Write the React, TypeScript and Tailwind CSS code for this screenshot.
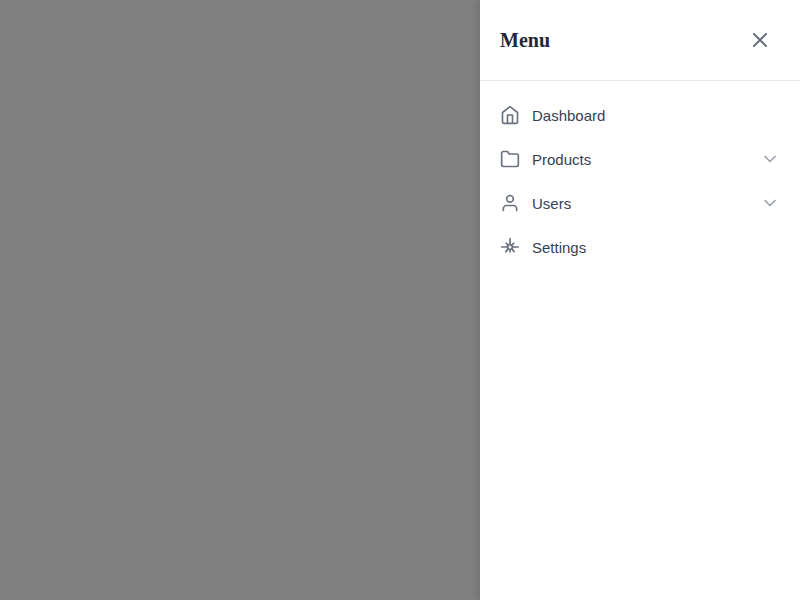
import React from "react";

const icon = {
  width: 20,
  height: 20,
  viewBox: "0 0 24 24",
  fill: "none",
  stroke: "currentColor",
  strokeWidth: 2,
  strokeLinecap: "round" as const,
  strokeLinejoin: "round" as const,
};

function Chevron() {
  return (
    <svg {...icon} className="shrink-0 text-[#9ca3af]">
      <path d="M6 9l6 6 6-6" />
    </svg>
  );
}

function Item({ label, children, expandable }: { label: string; children: React.ReactNode; expandable?: boolean }) {
  return (
    <button className="flex h-11 w-full items-center gap-3 px-5 text-left text-[15px] text-[#374151]">
      <svg {...icon} className="shrink-0 text-[#6b7280]">{children}</svg>
      <span className="flex-1 pt-0.5">{label}</span>
      {expandable && <Chevron />}
    </button>
  );
}

export default function App() {
  return (
    <div className="flex h-screen w-screen overflow-hidden bg-[#808080] font-['Liberation_Sans',sans-serif]">
      <div className="flex-1" />
      <aside className="flex w-80 flex-col bg-white shadow-[-2px_0_8px_rgba(0,0,0,0.15)]">
        <header className="flex h-[81px] items-center justify-between border-b border-[#e5e7eb] p-5">
          <h2 className="font-['Liberation_Serif',serif] text-xl font-bold text-[#1f2937]">Menu</h2>
          <button className="flex size-10 items-center justify-center text-[#6b7280]" aria-label="Close">
            <svg {...icon} width={24} height={24}><path d="M18 6L6 18M6 6l12 12" /></svg>
          </button>
        </header>
        <nav className="py-3">
          <Item label="Dashboard"><path d="M3 9l9-7 9 7v11a2 2 0 01-2 2H5a2 2 0 01-2-2z" /><path d="M9 22V12h6v10" /></Item>
          <Item label="Products" expandable><path d="M22 19a2 2 0 01-2 2H4a2 2 0 01-2-2V5a2 2 0 012-2h5l2 3h9a2 2 0 012 2z" /></Item>
          <Item label="Users" expandable><path d="M20 21v-2a4 4 0 00-4-4H8a4 4 0 00-4 4v2" /><circle cx="12" cy="7" r="4" /></Item>
          <Item label="Settings"><circle cx="12" cy="12" r="3" /><path d="M12 2v7M12 15v3M2 12h7M15 12h7M7.5 7.5l2.8 2.8M16.5 7.5l-2.8 2.8M10 14l-3 3.5M14 14l3 3.5" /></Item>
        </nav>
      </aside>
    </div>
  );
}
